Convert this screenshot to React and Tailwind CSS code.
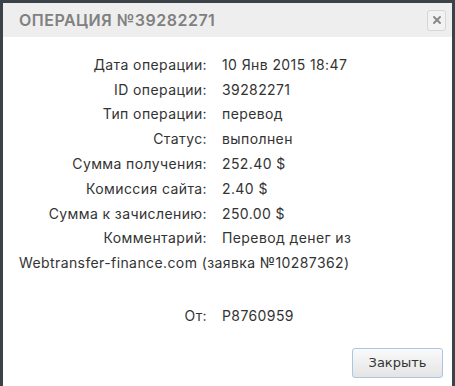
import { X } from "lucide-react";

const ROWS = [
  ["Дата операции:", "10 Янв 2015 18:47"],
  ["ID операции:", "39282271"],
  ["Тип операции:", "перевод"],
  ["Статус:", "выполнен"],
  ["Сумма получения:", "252.40 $"],
  ["Комиссия сайта:", "2.40 $"],
  ["Сумма к зачислению:", "250.00 $"],
];

function Row({ label, children }) {
  return (
    <div className="flex h-[24.8px] items-center">
      <span className="w-[188px] text-right">{label}</span>
      <span className="ml-[15px]">{children}</span>
    </div>
  );
}

export default function App() {
  return (
    <div className="h-[386px] w-[455px] overflow-hidden bg-[#3b4248] pt-[3px] pl-[3px] pr-[3px]">
      <div className="flex h-full flex-col bg-white font-['Inter',sans-serif]">
        <div className="flex h-[34px] items-center justify-between bg-[#eeeeee] pl-4 pr-[6px]">
          <h1 className="text-[16px] font-semibold tracking-[0.5px] text-[#808080]">ОПЕРАЦИЯ №39282271</h1>
          <button className="flex h-[21px] w-[19px] items-center justify-center rounded-[3px] border border-[#d6d6d6] bg-[#f2f2f2]">
            <X className="size-3 text-[#8a8a8a]" strokeWidth={4} />
          </button>
        </div>

        <div className="px-4 pt-[15px] text-[14px] tracking-[0.4px] text-[#333]">
          {ROWS.map(([l, v]) => (
            <Row key={l} label={l}>{v}</Row>
          ))}
          <Row label="Комментарий:">Перевод денег из</Row>
          <div className="flex h-[24.8px] items-center">Webtransfer-finance.com (заявка №10287362)</div>
          <div className="h-[28px]" />
          <Row label="От:">P8760959</Row>
        </div>

        <div className="mt-auto flex justify-end pr-[9px] pb-[8px]">
          <button className="h-[30px] w-[91px] rounded-[3px] border border-[#a9c6e4] bg-gradient-to-b from-[#fafafa] to-[#e4e4e4] font-['DejaVu_Sans',sans-serif] text-[13px] text-[#333]">
            Закрыть
          </button>
        </div>
      </div>
    </div>
  );
}
